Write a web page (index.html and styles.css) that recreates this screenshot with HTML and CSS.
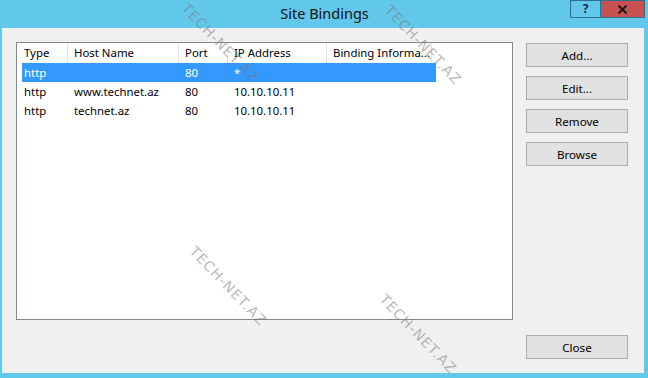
FILE: index.html
```html
<!DOCTYPE html>
<html>
<head>
<meta charset="utf-8">
<title>Site Bindings</title>
<link rel="stylesheet" href="styles.css">
</head>
<body>
<div class="window">
  <div class="titlebar">
    <div></div>
    <div class="title">Site Bindings</div>
    <div class="controls">
      <div class="ctl help">?</div>
      <div class="ctl close">
        <svg width="11" height="9" viewBox="0 0 11 9"><path d="M1.5 0.5 L9.5 8.5 M9.5 0.5 L1.5 8.5" stroke="#1a1a1a" stroke-width="2" fill="none"/></svg>
      </div>
    </div>
  </div>
  <div class="client">
    <div class="listbox">
      <div class="header">
        <div class="hcell">Type</div>
        <div class="hcell">Host Name</div>
        <div class="hcell">Port</div>
        <div class="hcell">IP Address</div>
        <div class="hcell">Binding Informa...</div>
      </div>
      <div class="row selected">
        <div class="cell">http</div>
        <div class="cell"></div>
        <div class="cell">80</div>
        <div class="cell">*</div>
        <div class="cell"></div>
      </div>
      <div class="row">
        <div class="cell">http</div>
        <div class="cell">www.technet.az</div>
        <div class="cell">80</div>
        <div class="cell">10.10.10.11</div>
        <div class="cell"></div>
      </div>
      <div class="row">
        <div class="cell">http</div>
        <div class="cell">technet.az</div>
        <div class="cell">80</div>
        <div class="cell">10.10.10.11</div>
        <div class="cell"></div>
      </div>
    </div>
    <div class="actions">
      <button class="btn">Add...</button>
      <button class="btn">Edit...</button>
      <button class="btn">Remove</button>
      <button class="btn">Browse</button>
      <button class="btn btn-close">Close</button>
    </div>
  </div>
  <div class="wm wm1">TECH-NET.AZ</div>
  <div class="wm wm2">TECH-NET.AZ</div>
  <div class="wm wm3">TECH-NET.AZ</div>
  <div class="wm wm4">TECH-NET.AZ</div>
</div>
</body>
</html>
```
FILE: styles.css
```css
html, body {
  margin: 0;
  padding: 0;
}
body {
  width: 648px;
  height: 378px;
  overflow: hidden;
  font-family: "Noto Sans", "Open Sans", sans-serif;
  font-size: 11.4px;
  color: #000;
}
.window {
  position: relative;
  width: 648px;
  height: 378px;
  background: #62c8eb;
  display: flex;
  flex-direction: column;
  box-sizing: border-box;
}
.titlebar {
  height: 28px;
  display: grid;
  grid-template-columns: 1fr auto 1fr;
  flex: none;
}
.title {
  font-size: 14.5px;
  line-height: 26px;
  color: #111;
  padding-left: 1px;
}
.controls {
  display: flex;
  justify-content: flex-end;
  align-items: flex-start;
  padding-right: 3px;
}
.ctl {
  height: 18px;
  box-sizing: border-box;
  border: 1px solid #2d6f8f;
  display: flex;
  align-items: center;
  justify-content: center;
}
.help {
  width: 30px;
  border-right: none;
  font-weight: bold;
  font-size: 12px;
  color: #1a2a3a;
  line-height: 16px;
}
.close {
  width: 45px;
  background: #c75050;
}
.client {
  flex: 1;
  margin: 0 4px 5px 2px;
  background: #f0f0f0;
  display: flex;
  gap: 13px;
  padding: 14px 16px 14px 14px;
  box-sizing: border-box;
}
.listbox {
  width: 497px;
  height: 278px;
  box-sizing: border-box;
  border: 1px solid #828790;
  background: #fff;
  flex: none;
}
.header {
  display: grid;
  grid-template-columns: 51px 111px 49px 99px 105px;
  height: 20px;
}
.hcell {
  padding-left: 6px;
  line-height: 20px;
  border-right: 1px solid #e5e5e5;
  white-space: nowrap;
  overflow: hidden;
}
.hcell:first-child {
  padding-left: 7px;
}
.row {
  display: grid;
  grid-template-columns: 46px 111px 49px 99px 109px;
  height: 19px;
  width: 414px;
  margin-left: 5px;
  line-height: 19px;
}
.row .cell {
  padding-left: 6px;
  white-space: nowrap;
}
.row .cell:first-child {
  padding-left: 2px;
}
.row.selected {
  background: #3399ff;
  color: #fff;
}
.actions {
  flex: 1;
  display: flex;
  flex-direction: column;
  gap: 9px;
  padding-top: 1px;
}
.btn {
  height: 24px;
  width: 102px;
  box-sizing: border-box;
  border: 1px solid #adadad;
  background: #e1e1e1;
  font-family: inherit;
  font-size: 11.6px;
  color: #000;
  padding: 0;
  margin: 0;
}
.btn-close {
  margin-top: auto;
}
.wm {
  position: absolute;
  font-family: "DejaVu Sans", sans-serif;
  font-size: 14px;
  color: rgba(120, 120, 120, 0.55);
  letter-spacing: 1px;
  transform: rotate(46deg);
  transform-origin: left top;
  white-space: nowrap;
  pointer-events: none;
}
.wm1 { left: 190px; top: 0px; }
.wm2 { left: 393px; top: 2px; }
.wm3 { left: 198px; top: 243px; }
.wm4 { left: 388px; top: 291px; }
```
